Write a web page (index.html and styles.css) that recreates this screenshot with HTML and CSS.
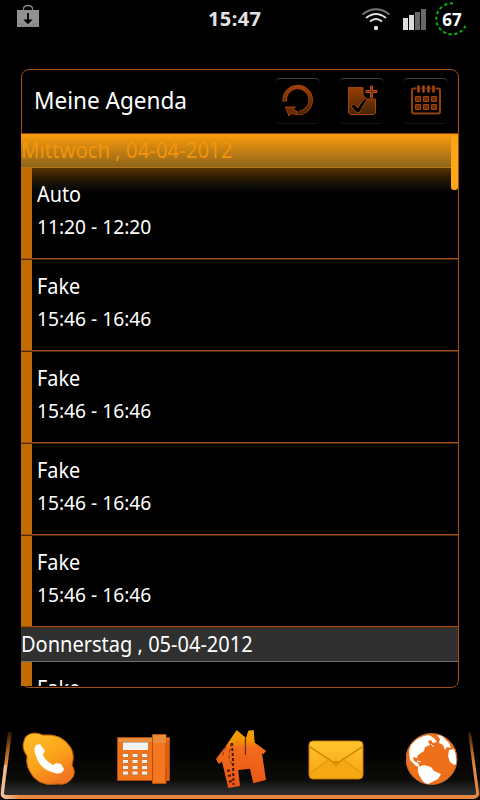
FILE: index.html
```html
<!DOCTYPE html>
<html lang="de">
<head>
    <meta charset="UTF-8">
    <meta name="viewport" content="width=device-width, initial-scale=1.0">
    <title>Meine Agenda</title>
    <link rel="stylesheet" href="styles.css">
</head>
<body>
<div class="screen">

    <div class="statusbar">
        <svg class="market" width="24" height="24" viewBox="16 4 24 24">
            <path d="M23.500 10V8q1-2.500 4.500-2.500t4.500 2.500v2" fill="none" stroke="#858585" stroke-width="1.300"/>
            <path d="M17 10h22v17H17z" fill="#929292"/>
            <path d="M28 13v9M25.500 20.500l2.500 2.500 2.500-2.500z" fill="#000" stroke="#000" stroke-width="1.800"/>
            <path d="M19 24h5m9 0h5M21 26h16" stroke="#606060" stroke-dasharray="1 2"/>
        </svg>
        <div class="clock">15:47</div>
        <svg class="signals" width="66" height="32" viewBox="360 7 66 32">
            <g fill="none" stroke-width="2">
                <path d="M362.500 14.500q13.500-10.500 27 0" stroke="#777"/>
                <path d="M366 18q10-8 20 0M370 21.500q6-5 12 0" stroke="#e2e2e2"/>
            </g>
            <circle cx="376" cy="28" r="2.200" fill="#e2e2e2"/>
            <path d="M403 18h5v12h-5zM409 15h5v15h-5z" fill="#dcdcdc"/>
            <path d="M415 12h5v18h-5zM421 9h5v21h-5z" fill="#686868"/>
        </svg>
        <div class="battery">
            <svg width="34" height="36" viewBox="434 1 34 36">
                <path d="M453 3.400A15.500 15.500 0 1 0 465.500 26" fill="none" stroke="#00b50c" stroke-width="2" stroke-dasharray="3.200 2.600"/>
            </svg>
            <span>67</span>
        </div>
    </div>

    <div class="widget">
        <div class="header">
            <h1>Meine Agenda</h1>
            <div class="button">
                <svg width="45" height="47" viewBox="275 78 45 47">
                    <path d="M284.800 101.500A13 13 0 1 1 299 113" fill="none" stroke="#ae4106" stroke-width="4.500"/>
                    <path d="M284.800 101.500A13 13 0 1 1 299 113" fill="none" stroke="url(#rust)" stroke-width="3"/>
                    <path d="M285.500 107h10l-2.500 2.500 5 2.500v3l-7-2-2 3z" fill="#672e05" stroke="#a64007"/>
                </svg>
            </div>
            <div class="button">
                <svg width="45" height="47" viewBox="339 78 45 47">
                    <path d="M348.500 87.500h14.500v7.500l3 4h9.500v14l-1.500 1.500h-24l-1.500-1.500z" fill="url(#rust)" stroke="#a84209"/>
                    <path d="M351 106l3-2 4 4q3-7 8-10l1 2q-4 5-7 12l-3 1z" fill="#000" stroke="#b84c0d" stroke-width=".8"/>
                    <path d="M370.500 86h2v4.500h4.500v2h-4.500v5h-2v-5H366v-2h4.500z" fill="#7a3208" stroke="#bd4d15"/>
                </svg>
            </div>
            <div class="button">
                <svg width="45" height="47" viewBox="403 78 45 47">
                    <rect x="412" y="88.500" width="28" height="25" rx="2" fill="none" stroke="#944007" stroke-width="2"/>
                    <path d="M418.500 85v8m5-8v8m5-8v8m5-8v8" stroke="#000" stroke-width="4"/>
                    <path d="M418.500 85.500v7m5-7v7m5-7v7m5-7v7" stroke="#b34a12" stroke-width="2.400"/>
                    <path d="M415.500 96.500h5v5h-5zM423.500 96.500h5v5h-5zM431.500 96.500h5v5h-5zM415.500 104.500h5v5h-5zM423.500 104.500h5v5h-5zM431.500 104.500h5v5h-5z" fill="#6b2d05" stroke="#a84208"/>
                </svg>
            </div>
        </div>

        <div class="list">
            <div class="glow"></div>
            <div class="day today"><span>Mittwoch , 04-04-2012</span></div>
            <div class="event">
                <div class="title">Auto</div>
                <div class="time">11:20 - 12:20</div>
            </div>
            <div class="event">
                <div class="title">Fake</div>
                <div class="time">15:46 - 16:46</div>
            </div>
            <div class="event">
                <div class="title">Fake</div>
                <div class="time">15:46 - 16:46</div>
            </div>
            <div class="event">
                <div class="title">Fake</div>
                <div class="time">15:46 - 16:46</div>
            </div>
            <div class="event">
                <div class="title">Fake</div>
                <div class="time">15:46 - 16:46</div>
            </div>
            <div class="day next"><span>Donnerstag , 05-04-2012</span></div>
            <div class="event">
                <div class="title">Fake</div>
            </div>
            <div class="scrollbar"></div>
        </div>
    </div>

    <div class="dock">
        <svg class="frame" width="480" height="80" viewBox="0 720 480 80">
            <defs>
                <linearGradient id="rust" x1="0" y1="0" x2="0" y2="1">
                    <stop offset="0" stop-color="#9b3d06"/>
                    <stop offset="1" stop-color="#422503"/>
                </linearGradient>
                <linearGradient id="edge" gradientUnits="userSpaceOnUse" x1="0" y1="731" x2="0" y2="765">
                    <stop offset="0" stop-color="#241600"/>
                    <stop offset=".6" stop-color="#aa6420"/>
                    <stop offset="1" stop-color="#e78740"/>
                </linearGradient>
                <linearGradient id="shine" x1="0" y1="0" x2="1" y2="0">
                    <stop offset="0" stop-color="#f0c8a5"/>
                    <stop offset="1" stop-color="#e78740"/>
                </linearGradient>
            </defs>
            <path d="M8 732h4L4 792q-1 3 2 3h468q3 0 2-3l-8-60h3l8 60q1 6-5 7H6q-6-1-5-7z" fill="url(#edge)"/>
            <path d="M4 765l-3 27q-1 6 5 7h14v-4H6q-3 0-2-3l3-27z" fill="url(#shine)"/>
        </svg>
        <svg class="app" width="56" height="60" viewBox="20 730 56 60">
            <path d="M24 741q1-7 10-8 5 0 9 2 19-2 28 13 4 7 1 17 4 7 1 12-6 9-15 7-22 4-30-16-2-6-1-12-6-8-3-15z" fill="url(#skype)" stroke="#b35b06"/>
            <path d="M36 745l4-1 5 7-2 3q0 5 10 11l3-2 5 1 3 5q-2 6-9 4-15-3-19-17-3-6 0-11z" fill="#fff"/>
            <defs>
                <linearGradient id="skype" x1="0" y1="0" x2=".6" y2="1">
                    <stop offset="0" stop-color="#ffc02a"/>
                    <stop offset=".6" stop-color="#fba21a"/>
                    <stop offset="1" stop-color="#f27520"/>
                </linearGradient>
            </defs>
        </svg>
        <svg class="app" width="56" height="56" viewBox="116 732 56 56">
            <path d="M117.500 737.500h52v43h-52z" fill="#f1741c" stroke="#a64a0a"/>
            <path d="M118 738h35v4h-35z" fill="#e98d3d"/>
            <path d="M152.500 734.500h13.500v49h-13.500z" fill="#f2771f" stroke="#b54d0b"/>
            <path d="M153 735h13v8h-13z" fill="#e98c3e"/>
            <path d="M153 769v-2m13 0v16m2-42v38" stroke="#c84b0a"/>
            <path d="M123 743h25v7h-25z" fill="#f4f4f4"/>
            <path d="M123 742.500h25" stroke="#b9b4ac"/>
            <path d="M123 755.500h25M123 761.500h25M123 767.500h25M123 773.500h25" stroke="#b98355" stroke-width="4" stroke-dasharray="6 3.500"/>
            <path d="M123 755.500h25M123 761.500h25M123 767.500h25M123 773h25" stroke="#f4eee9" stroke-width="3" stroke-dasharray="5 4.500"/>
        </svg>
        <svg class="app" width="56" height="60" viewBox="211 730 56 60">
            <path d="M235.700 730l9.300 8 2.300-7.300 5.400-.7 1 12.700 11.300 8-2.300 3.300-1.700-.5 4 26.500-12.700 3.300-3.300-14.600-11.700 1.300 1.700 16-11.700 2-6.300-26.300-3.300 2.300-2.700-5 9.300-12.300z" fill="url(#home)"/>
            <path d="M244.500 738v17" stroke="#702c05" stroke-width="1.200"/>
            <path d="M225 746l-4 11m9-14l-2 14 3 8" fill="none" stroke="#8a3a08" stroke-dasharray="4 2"/>
            <path d="M231 743l1 16 .500 26M226 771l4-1m-3 6l4-1m-3 7l4-2" fill="none" stroke="#461903" stroke-width="2" stroke-dasharray="3 2"/>
            <path d="M236 742h8M235 750h20M238 757h20" stroke="#b64f08" stroke-dasharray="1 6"/>
            <defs>
                <linearGradient id="home" x1="0" y1="0" x2="0" y2="1">
                    <stop offset="0" stop-color="#f6a000"/>
                    <stop offset=".2" stop-color="#ef9200"/>
                    <stop offset=".3" stop-color="#f36c1c"/>
                    <stop offset="1" stop-color="#ea5516"/>
                </linearGradient>
            </defs>
        </svg>
        <svg class="app" width="58" height="42" viewBox="308 739 58 42">
            <rect x="309" y="741" width="54" height="38" rx="4" fill="url(#mail)" stroke="#c47b08"/>
            <path d="M310 773l19-14 7 6 7-6 19 14q0 5-5 5h-43q-4 0-4-5z" fill="#f6a814"/>
            <path d="M311 773l18-14m14 0l18 14" stroke="#d78c0a"/>
            <path d="M310 747l20 13 6 5 6-5 20-13" fill="none" stroke="#d38508" stroke-width="1.500"/>
            <path d="M331 761h10l-5 4.500z" fill="#e08e09"/>
            <defs>
                <linearGradient id="mail" x1="0" y1="0" x2="0" y2="1">
                    <stop offset="0" stop-color="#ffc62f"/>
                    <stop offset="1" stop-color="#f8a20e"/>
                </linearGradient>
            </defs>
        </svg>
        <svg class="app" width="54" height="54" viewBox="406 732 54 54">
            <circle cx="431.500" cy="758" r="25.500" fill="#ef701b" stroke="#be6a3c"/>
            <path d="M411 744q7-9 18-10l5 3 3 4-4 1-2-3-3 1 2 4-5 2-1 4-6 4-1 3-4-1 1 4 4 2 2 4-4-1-6-6-1-9z" fill="#fff"/>
            <path d="M418 766l6-2 7 2 3 4 7 3-3 5-6 3-4 2q-5-1-7-6-4-5-3-11z" fill="#fff"/>
            <path d="M437 734l5 1 7 7 2 5-4-1-2 3-2-5-4-2 1-4zM449 749l5-1q3 7 2 15l-2 1-4-3-2-6z" fill="#fff"/>
            <path d="M417 760l4 1m10-18l3 3" stroke="#fff"/>
        </svg>
    </div>

</div>
</body>
</html>
```
FILE: styles.css
```css
html, body {
    margin: 0;
    background-color: #000;
    font-family: "Noto Sans", "Open Sans", sans-serif;
    color: #fff;
}

.screen {
    display: flex;
    flex-direction: column;
    width: 480px;
    height: 800px;
    overflow: hidden;
    background-color: #000;
}

.statusbar {
    display: flex;
    box-sizing: border-box;
    height: 69px;
    padding: 1px 12px 0 16px;
}

.market {
    margin-top: 3px;
}

.clock {
    width: 54px;
    margin-left: 168px;
    font-size: 20px;
    font-weight: bold;
    line-height: 36px;
    letter-spacing: 0.4px;
    color: #e2e2e2;
}

.signals {
    margin: 6px 0 0 98px;
}

.battery {
    display: grid;
    width: 34px;
    height: 36px;
    margin-left: 8px;
}

.battery svg, .battery span {
    grid-area: 1 / 1;
}

.battery span {
    padding-left: 2px;
    text-align: center;
    font-size: 17px;
    font-weight: bold;
    line-height: 37px;
}

.widget {
    box-sizing: border-box;
    width: 438px;
    height: 619px;
    margin-left: 21px;
    border: 1px solid #a34f14;
    border-radius: 8px;
}

.header {
    display: flex;
    box-sizing: border-box;
    height: 64px;
    padding: 8px 10px 0 12px;
    border-bottom: 1px solid #8a4612;
}

.header h1 {
    flex: 1;
    margin: 0;
    font-size: 24px;
    font-weight: normal;
    line-height: 44px;
    transform: scaleX(0.94);
    transform-origin: left;
}

.button {
    width: 45px;
    height: 46px;
    margin-left: 19px;
    border-top: 1px solid #3c3c3c;
    border-bottom: 1px solid #181818;
    border-radius: 5px;
    box-sizing: border-box;
}

.button svg {
    display: block;
    margin-top: -1px;
}

.list {
    position: relative;
    height: 552px;
    margin-left: -1px;
    overflow: hidden;
}

.day {
    box-sizing: border-box;
    height: 34px;
    border-bottom: 1px solid #707070;
    background-color: #303030;
    font-size: 22px;
    line-height: 30px;
}

.day span {
    display: inline-block;
    transform: scaleX(0.925);
    transform-origin: left;
}

.next span {
    transform: scaleX(0.91);
}

.today {
    border-bottom-color: #b5751a;
    background: linear-gradient(#fd9d0b, #8c641b);
    color: #f3940a;
}

.event {
    box-sizing: border-box;
    height: 92px;
    padding: 9px 0 0 16px;
    border-bottom: 1px solid #50280c;
    background: linear-gradient(#a34f14, #a34f14) bottom / 100% 1px no-repeat,
        linear-gradient(#c06c00, #c06c00) left / 11px 100% no-repeat;
}

.title {
    font-size: 22px;
    line-height: 32px;
    transform: scaleX(0.9);
    transform-origin: left;
}

.time {
    padding-top: 1px;
    font-size: 20px;
    line-height: 34px;
    transform: scaleX(0.96);
    transform-origin: left;
}

/* overscroll glow at the top edge */
.glow {
    position: absolute;
    top: 34px;
    left: 11px;
    right: 0;
    height: 25px;
    background: linear-gradient(rgba(105, 58, 3, 0.85), rgba(58, 34, 3, 0.75) 40%, rgba(24, 22, 14, 0.7) 70%, transparent);
}

.scrollbar {
    position: absolute;
    top: 2px;
    right: 0;
    width: 7px;
    height: 54px;
    border-radius: 3px;
    background-color: #fba519;
}

.dock {
    position: relative;
    display: flex;
    align-items: center;
    box-sizing: border-box;
    height: 80px;
    margin-top: 32px;
    padding-left: 20px;
    gap: 40px;
    background: linear-gradient(#000 35%, #0b0b08 75%, #242424 85%, #303030 94%, #000 95%);
}

.frame {
    position: absolute;
    top: 0;
    left: 0;
}

.app {
    flex: none;
    z-index: 1;
}
```
